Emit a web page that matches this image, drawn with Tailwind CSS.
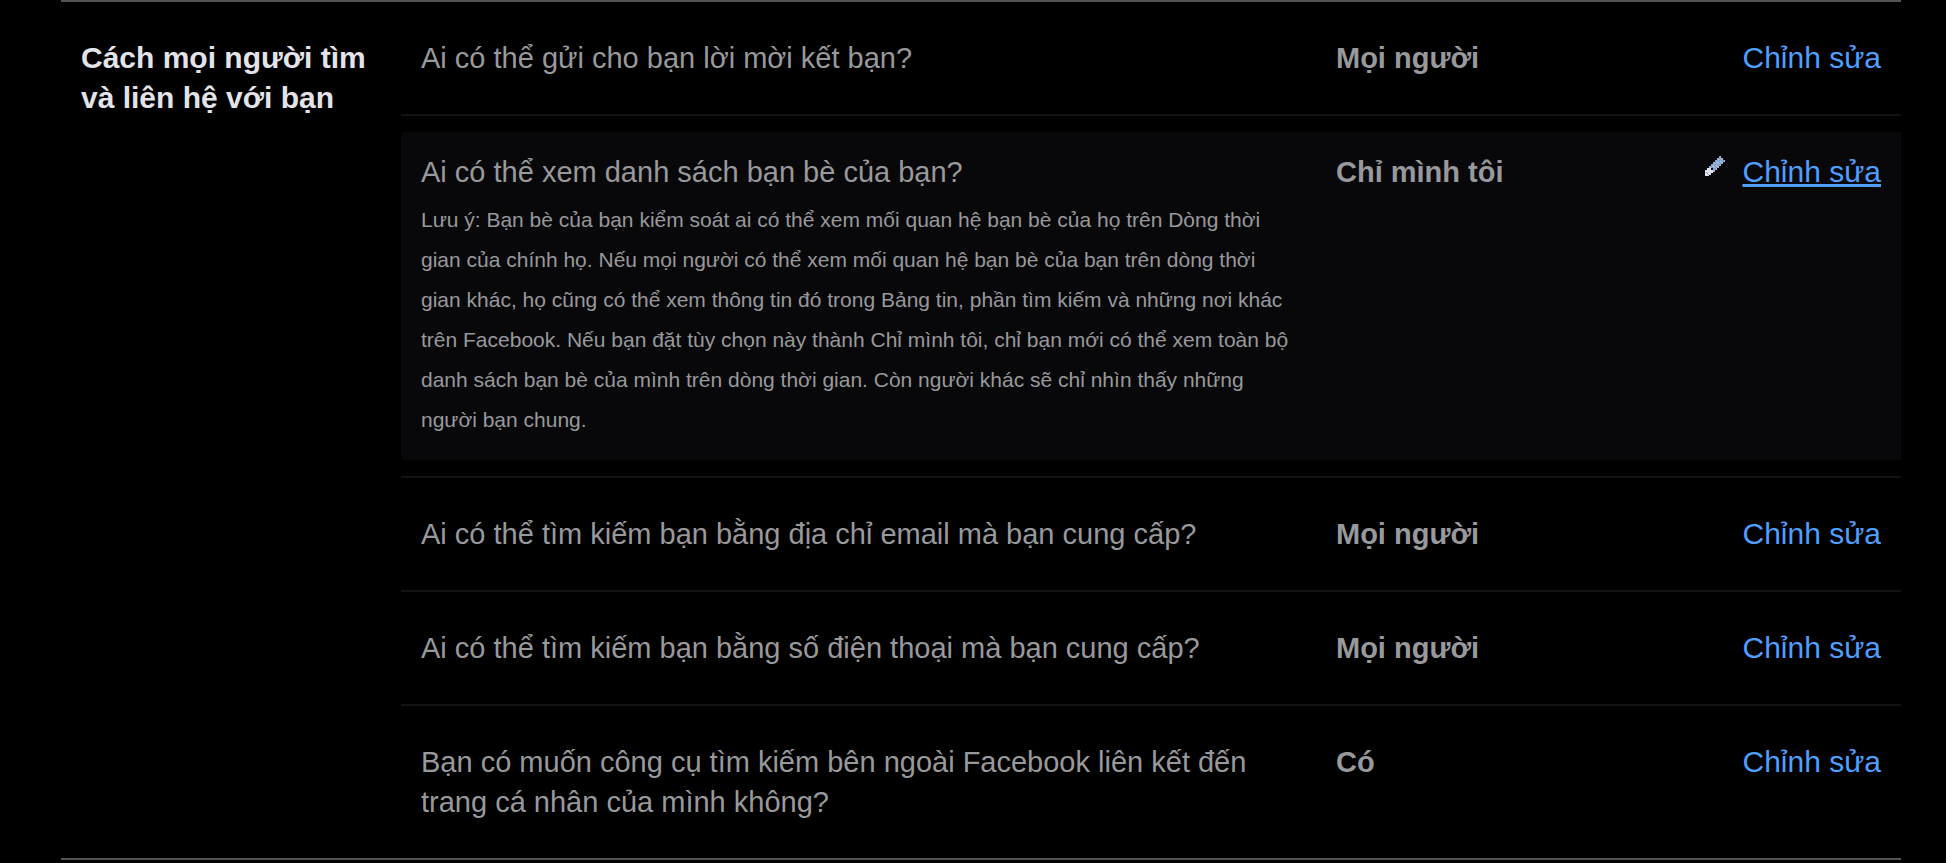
<!DOCTYPE html>
<html lang="vi">
<head>
  <meta charset="UTF-8" />
  <meta name="viewport" content="width=device-width, initial-scale=1.0" />
  <title>Cài đặt quyền riêng tư</title>
  <script src="https://cdn.jsdelivr.net/npm/@tailwindcss/browser@4"></script>
</head>
<body class="bg-black text-[#98999c] text-[29px] leading-10 font-['Liberation_Sans',Arial,sans-serif]">
  <section class="ml-[61px] mr-[45px] flex border-y-2 border-[#545454]">
    <h2 class="w-[340px] shrink-0 px-5 pt-9 text-[30px] leading-10 font-bold text-[#e2e4e9]">Cách mọi người tìm và liên hệ với bạn</h2>

    <ul class="flex-1 divide-y-2 divide-[#121212]">
      <li class="py-4">
        <div class="flex p-5">
          <p class="flex-1 pr-10">Ai có thể gửi cho bạn lời mời kết bạn?</p>
          <p class="w-[300px] font-bold">Mọi người</p>
          <div class="w-[245px] text-right text-[30px] leading-10">
            <a href="#" class="text-[#4f9fff] hover:underline">Chỉnh sửa</a>
          </div>
        </div>
      </li>

      <!-- hovered row -->
      <li class="py-4">
        <div class="flex p-5 bg-[#08080a]">
          <div class="flex-1 pr-10">
            <p>Ai có thể xem danh sách bạn bè của bạn?</p>
            <p class="mt-2 text-[21px] leading-10">Lưu ý: Bạn bè của bạn kiểm soát ai có thể xem mối quan hệ bạn bè của họ trên Dòng thời gian của chính họ. Nếu mọi người có thể xem mối quan hệ bạn bè của bạn trên dòng thời gian khác, họ cũng có thể xem thông tin đó trong Bảng tin, phần tìm kiếm và những nơi khác trên Facebook. Nếu bạn đặt tùy chọn này thành Chỉ mình tôi, chỉ bạn mới có thể xem toàn bộ danh sách bạn bè của mình trên dòng thời gian. Còn người khác sẽ chỉ nhìn thấy những người bạn chung.</p>
          </div>
          <p class="w-[300px] font-bold">Chỉ mình tôi</p>
          <div class="w-[245px] flex justify-end items-start gap-[18px] text-[30px] leading-10">
            <svg class="mt-1 w-5 h-5" viewBox="0 0 20 20" shape-rendering="crispEdges" aria-hidden="true">
              <defs>
                <pattern id="dither" width="4" height="4" patternUnits="userSpaceOnUse">
                  <rect width="4" height="4" fill="#a9b5c6" />
                  <path d="M0 0h1v1h-1zM2 2h1v1h-1zM2 0h1v1h-1zM1 1h1v1h-1zM3 3h1v1h-1z" fill="#5596ea" />
                </pattern>
              </defs>
              <path d="M14 0H16V2H18V4H20V6H18V8H16V10H14V12H12V14H10V16H8V12H4V10H6V8H8V6H10V4H12V2H14Z" fill="url(#dither)" />
              <path d="M2 12H6V14H8V17H6V19H4V20H0V14H2Z" fill="#dfe4ea" />
              <path d="M1 16h1v1h-1zM2 17h1v1h-1zM3 18h1v1h-1z" fill="#6ba3ee" />
            </svg>
            <a href="#" class="text-[#4f9fff] underline decoration-3">Chỉnh sửa</a>
          </div>
        </div>
      </li>

      <li class="py-4">
        <div class="flex p-5">
          <p class="flex-1 pr-10">Ai có thể tìm kiếm bạn bằng địa chỉ email mà bạn cung cấp?</p>
          <p class="w-[300px] font-bold">Mọi người</p>
          <div class="w-[245px] text-right text-[30px] leading-10">
            <a href="#" class="text-[#4f9fff] hover:underline">Chỉnh sửa</a>
          </div>
        </div>
      </li>

      <li class="py-4">
        <div class="flex p-5">
          <p class="flex-1 pr-10">Ai có thể tìm kiếm bạn bằng số điện thoại mà bạn cung cấp?</p>
          <p class="w-[300px] font-bold">Mọi người</p>
          <div class="w-[245px] text-right text-[30px] leading-10">
            <a href="#" class="text-[#4f9fff] hover:underline">Chỉnh sửa</a>
          </div>
        </div>
      </li>

      <li class="py-4">
        <div class="flex p-5">
          <p class="flex-1 pr-10">Bạn có muốn công cụ tìm kiếm bên ngoài Facebook liên kết đến trang cá nhân của mình không?</p>
          <p class="w-[300px] font-bold">Có</p>
          <div class="w-[245px] text-right text-[30px] leading-10">
            <a href="#" class="text-[#4f9fff] hover:underline">Chỉnh sửa</a>
          </div>
        </div>
      </li>
    </ul>
  </section>
</body>
</html>
